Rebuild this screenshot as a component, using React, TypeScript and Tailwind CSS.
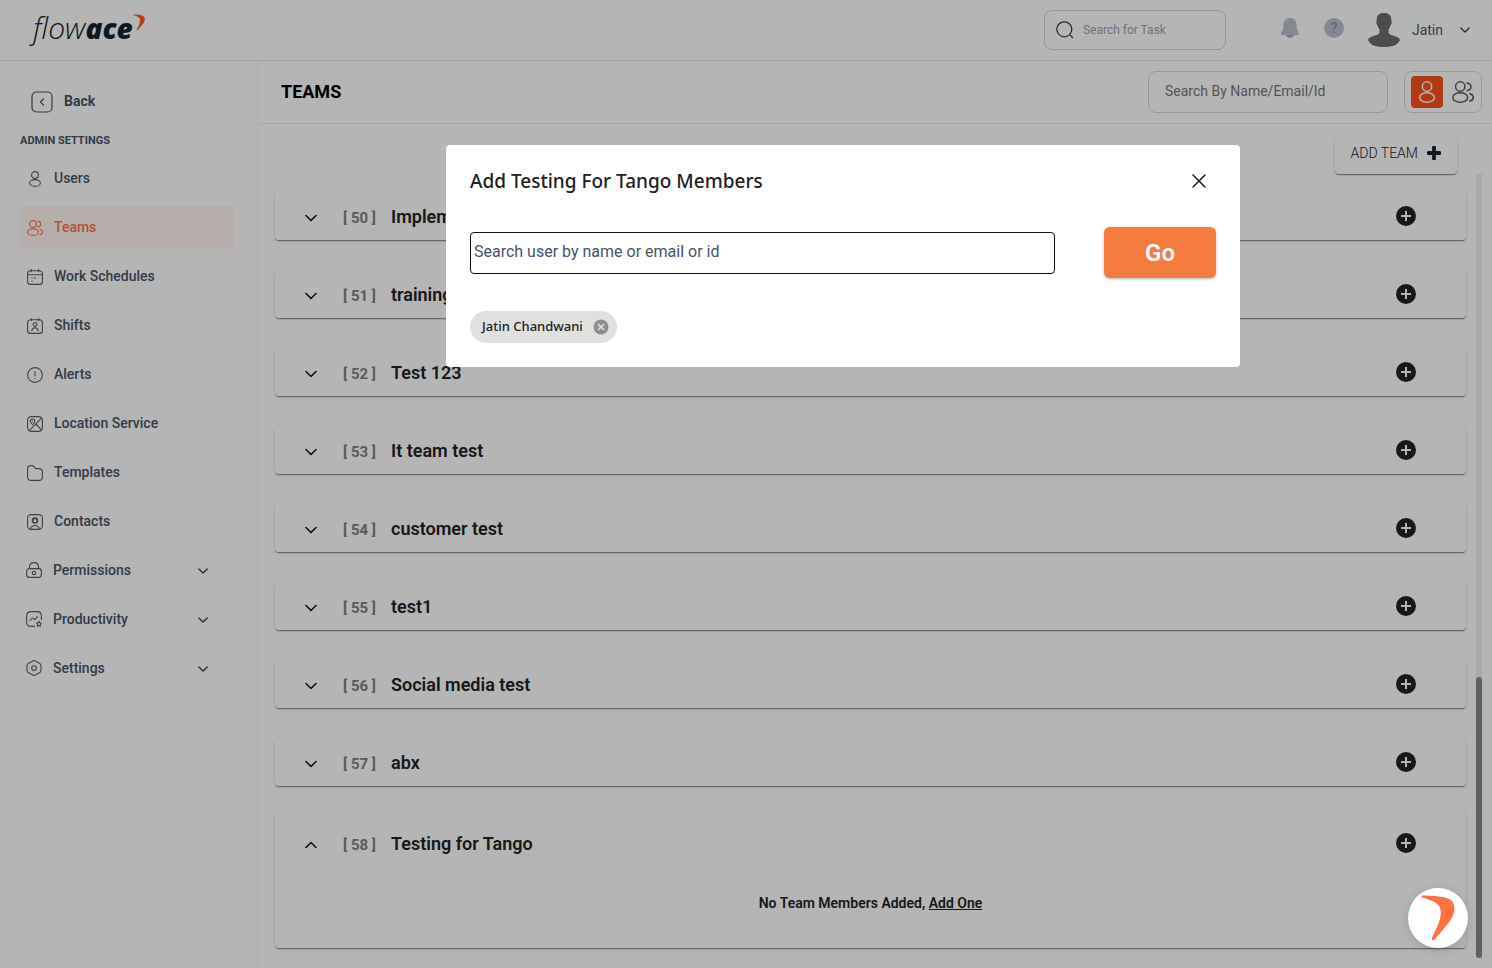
import { useState, type ReactNode } from "react";

type IconProps = { className?: string };

const stroke = {
  fill: "none",
  stroke: "currentColor",
  strokeLinecap: "round" as const,
  strokeLinejoin: "round" as const,
};

function Svg({ className = "size-4", width = 1.1, children }: IconProps & { width?: number; children: ReactNode }) {
  return (
    <svg viewBox="0 0 16 16" className={className} {...stroke} strokeWidth={width} aria-hidden="true">
      {children}
    </svg>
  );
}

const UserIcon = ({ className }: IconProps) => (
  <Svg className={className}>
    <circle cx="8" cy="4" r="3.4" />
    <ellipse cx="8" cy="12" rx="5.4" ry="3.4" />
  </Svg>
);

const UsersIcon = ({ className }: IconProps) => (
  <Svg className={className}>
    <circle cx="6" cy="4" r="3.4" />
    <ellipse cx="6" cy="12" rx="5.4" ry="3.4" />
    <path d="M11 1.4c1.7.3 2.8 1.3 2.8 2.7s-1.1 2.5-2.8 2.8M13 9.2c1.5.4 2.5 1.4 2.5 2.7s-1 2.3-2.5 2.7" />
  </Svg>
);

const CalendarIcon = () => (
  <Svg>
    <rect x=".6" y="1.8" width="14.8" height="13.6" rx="3" />
    <path d="M.8 5.8h14.4M4.3.6v2M11.7.6v2" />
    <path d="M5 9h.01M8 9h.01M5 12h.01M8 8.6v.8" strokeWidth="1.4" />
  </Svg>
);

const ShiftIcon = () => (
  <Svg>
    <rect x=".6" y="1.8" width="14.8" height="13.6" rx="3" />
    <path d="M4.3.6v2M11.7.6v2" />
    <circle cx="8" cy="6.6" r="1.9" />
    <path d="M4.8 12.8c.3-2 1.5-3.1 3.2-3.1s2.9 1.1 3.2 3.1M8 8.5v1.2" />
  </Svg>
);

const AlertIcon = () => (
  <Svg>
    <circle cx="8" cy="8" r="7.4" />
    <path d="M8 4.5v4.3M8 11.3v.2" />
  </Svg>
);

const LocationIcon = () => (
  <Svg>
    <rect x=".6" y=".6" width="14.8" height="14.8" rx="3.6" />
    <path d="M5.6 8.6C4.4 7.6 3.4 6.4 3.4 5.2a2.2 2.2 0 0 1 4.4 0c0 1.2-1 2.4-2.2 3.4z" />
    <path d="M5.6 5.2h.01M14.6 2.2 2.4 14.4M9.3 8.5l5.4 5.6" />
  </Svg>
);

const FolderIcon = () => (
  <Svg>
    <path d="M.6 12V3.6c0-2 1-3 3-3h1.3c1 0 1.5.3 2 1l1.2 1.5c.3.4.6.5 1.1.5h2.9c2.3 0 3.3 1 3.3 3.3V12c0 2.3-1 3.4-3.3 3.4H4C1.7 15.4.6 14.3.6 12z" />
  </Svg>
);

const ContactIcon = () => (
  <Svg>
    <rect x=".6" y=".6" width="14.8" height="14.8" rx="3.6" />
    <circle cx="8" cy="6.6" r="2.4" strokeWidth="1.7" />
    <path d="M3.6 15c.5-2.3 2.1-3.5 4.4-3.5s3.9 1.2 4.4 3.5" />
  </Svg>
);

const LockIcon = () => (
  <Svg>
    <rect x=".6" y="6.6" width="14.8" height="8.8" rx="2.8" />
    <path d="M3.5 6.4V5C3.5 2.3 5 .6 8 .6s4.5 1.7 4.5 4.4v1.4" />
    <circle cx="8" cy="11" r="1.7" />
  </Svg>
);

const ProductivityIcon = () => (
  <Svg>
    <path d="M8.5 15.4H5c-3 0-4.4-1.4-4.4-4.4V5C.6 2 2 .6 5 .6h6c3 0 4.4 1.4 4.4 4.4v3.5" />
    <path d="m4.3 9.3 1.6-1.8c.3-.4.8-.4 1.2-.1l1.1.8c.4.3.8.2 1.2-.1l2-2.4" />
    <path d="m13 10.3.8 1.5 1.6.4-1.1 1.3.2 1.7-1.5-.6-1.5.6.2-1.7-1.1-1.3 1.6-.4z" />
  </Svg>
);

const SettingsIcon = () => (
  <Svg>
    <path d="M9.3.9 13.7 3.4c.8.5 1.3 1.2 1.3 2.2v4.8c0 1-.5 1.7-1.3 2.2l-4.4 2.5c-.9.5-1.7.5-2.6 0l-4.4-2.5C1.5 12.1 1 11.4 1 10.4V5.6c0-1 .5-1.7 1.3-2.2L6.7.9c.9-.5 1.7-.5 2.6 0z" />
    <circle cx="8" cy="8" r="2.3" />
  </Svg>
);

function Chevron({ up = false, className = "size-3" }: IconProps & { up?: boolean }) {
  return (
    <svg viewBox="0 0 12 12" className={className} {...stroke} strokeWidth="1.6" aria-hidden="true">
      <path d={up ? "M1 8.5 6 3.5l5 5" : "m1 3.5 5 5 5-5"} />
    </svg>
  );
}

function Swoosh({ className }: IconProps) {
  return (
    <svg viewBox="0 0 34 46" className={className} fill="currentColor" aria-hidden="true">
      <path d="M.6.6C.2 1.5.6 2.3 1.7 2.7 12 5.5 19.5 8 19.8 17c.2 8-4.5 17-8.8 25.5-.5 1.1-.3 2.4.7 2.7.9.3 1.5-.2 2.1-.9C22 34 33 24 33.5 14.5 33.9 5 27 2.5 18 1.6 12 1 6 .7.6.6z" />
    </svg>
  );
}

const links = [
  { name: "Users", icon: <UserIcon /> },
  { name: "Teams", icon: <UsersIcon />, active: true },
  { name: "Work Schedules", icon: <CalendarIcon /> },
  { name: "Shifts", icon: <ShiftIcon /> },
  { name: "Alerts", icon: <AlertIcon /> },
  { name: "Location Service", icon: <LocationIcon /> },
  { name: "Templates", icon: <FolderIcon /> },
  { name: "Contacts", icon: <ContactIcon /> },
];

const groups = [
  { name: "Permissions", icon: <LockIcon /> },
  { name: "Productivity", icon: <ProductivityIcon /> },
  { name: "Settings", icon: <SettingsIcon /> },
];

const teams = [
  { id: 50, name: "Implementation" },
  { id: 51, name: "training" },
  { id: 52, name: "Test 123" },
  { id: 53, name: "It team test" },
  { id: 54, name: "customer test" },
  { id: 55, name: "test1" },
  { id: 56, name: "Social media test" },
  { id: 57, name: "abx" },
];

const cardShadow = "rounded bg-white shadow-[0_2px_1px_-1px_rgba(0,0,0,0.25),0_1px_1px_rgba(0,0,0,0.2),0_1px_3px_rgba(0,0,0,0.15)]";

function TeamHeader({ id, name, open = false }: { id: number; name: string; open?: boolean }) {
  return (
    <div className="flex h-12 items-center pr-[50px] pl-[30px]">
      <button type="button" aria-label={`Toggle ${name}`} className="mt-1 text-[#101828]">
        <Chevron up={open} />
      </button>
      <span className="mt-1 ml-[26px] w-12 text-[15px] font-bold text-[#808080]">[ {id} ]</span>
      <h2 className="mt-px text-lg font-semibold text-[#222]">{name}</h2>
      <button type="button" aria-label={`Add member to ${name}`} className="ml-auto">
        <svg viewBox="0 0 20 20" className="size-5" aria-hidden="true">
          <circle cx="10" cy="10" r="10" fill="#222" />
          <path d="M10 5v10M5 10h10" stroke="#fff" strokeWidth="2" />
        </svg>
      </button>
    </div>
  );
}

function Header() {
  return (
    <header className="flex h-[61px] shrink-0 items-center border-b border-[#e4e4e7] pr-[22px] pl-[33px]">
      <a href="#" aria-label="flowace" className="flex items-start pb-1 text-[#13222f]">
        <span className="font-['Open_Sans'] text-3xl leading-9 font-light italic">flow</span>
        <span className="font-['Open_Sans'] text-[28px] leading-9 font-extrabold italic">ace</span>
        <Swoosh className="mt-1 h-[17px] w-3 text-[#ff571a]" />
      </a>
      <div className="ml-auto flex items-center">
        <label className="flex h-10 w-[182px] items-center gap-[9px] rounded-lg border border-[#d0d5dd] px-[11px]">
          <svg viewBox="0 0 18 18" className="size-[18px] shrink-0 text-[#344054]" {...stroke} strokeWidth="1.3" aria-hidden="true">
            <circle cx="8.3" cy="8.3" r="7.5" />
            <path d="m14.5 14.5 2 2" />
          </svg>
          <input
            type="text"
            aria-label="Search for Task"
            placeholder="Search for Task"
            className="w-full min-w-0 text-xs outline-none placeholder:text-[#98a2b3]"
          />
        </label>
        <button type="button" aria-label="Notifications" className="mb-1 ml-[55px]">
          <svg viewBox="0 0 18 20" className="h-5 w-[18px]" aria-hidden="true">
            <path d="M4.8 16.5h8.4c-.6 2-2.2 3.3-4.2 3.3s-3.6-1.3-4.2-3.3z" fill="#98a2b3" />
            <path d="M9 0c3.7 0 6.3 2.6 6.6 6.2l.3 4.8 1.8 3.3c.7 1.5 0 2.8-1.6 3H1.9c-1.6-.2-2.3-1.5-1.6-3L2.1 11l.3-4.8C2.7 2.6 5.3 0 9 0z" fill="#bcc2ce" />
          </svg>
        </button>
        <button
          type="button"
          aria-label="Help"
          className="mb-1 ml-[25px] flex size-5 items-center justify-center rounded-full bg-[#bcc2ce] text-sm font-medium text-[#8a94a6]"
        >
          ?
        </button>
        <button type="button" className="ml-6 flex items-center">
          <svg viewBox="0 0 32 34" className="h-[34px] w-8" fill="#6b6b6b" aria-hidden="true">
            <path d="M16 0c4.8 0 7.3 2.5 7.3 6.5 0 1.3.5 2.4.3 4-.2 1.3-1 1.5-1.3 2.5-.4 1.5-1 2.5-1.8 3.6v3.2c.8 2 4.5 2.6 7.5 3.8 2.2.8 3.4 1.8 4 3.4C29.5 32 25 34 16 34S2.5 32 0 27c.6-1.6 1.8-2.6 4-3.4 3-1.2 6.7-1.8 7.5-3.8v-3.2c-.8-1.1-1.4-2.1-1.8-3.6-.3-1-1.1-1.2-1.3-2.5-.2-1.6.3-2.7.3-4C8.7 2.5 11.2 0 16 0z" />
          </svg>
          <span className="ml-3 text-sm text-[#475467]">Jatin</span>
          <Chevron className="ml-[17px] size-[10px] text-[#344054]" />
        </button>
      </div>
    </header>
  );
}

function Sidebar() {
  return (
    <aside className="w-[255px] shrink-0 px-5 pt-[29px] text-sm font-medium text-[#475467]">
      <a href="#" className="ml-[11px] flex items-center gap-[11px] font-bold">
        <svg viewBox="0 0 22 22" className="mt-px size-[22px]" {...stroke} strokeWidth="1.2" aria-hidden="true">
          <rect x="1" y="1" width="20" height="20" rx="4.5" />
          <path d="M12.5 8 9.5 11l3 3" />
        </svg>
        <span className="pb-[2px]">Back</span>
      </a>
      <h3 className="mt-5 text-[11px] leading-4 font-bold">ADMIN SETTINGS</h3>
      <nav className="mt-2 flex flex-col gap-[6px]">
        {links.map((link) => (
          <a
            key={link.name}
            href="#"
            className={
              link.active
                ? "flex h-[43px] items-center gap-[11px] rounded-md bg-[#fff5f1] pb-[2px] pl-[7px] text-[#ff7043]"
                : "flex h-[43px] items-center gap-[11px] pb-[2px] pl-[7px]"
            }
          >
            <span className={link.active ? "mt-[2px]" : "mt-[2px] text-[#5c5c5c]"}>{link.icon}</span>
            {link.name}
          </a>
        ))}
        {groups.map((group) => (
          <button
            key={group.name}
            type="button"
            className="flex h-[43px] items-center gap-[11px] pr-[27px] pb-[2px] pl-[6px]"
          >
            <span className="text-[#5c5c5c]">{group.icon}</span>
            {group.name}
            <Chevron className="mt-[2px] ml-auto size-[10px] text-[#344054]" />
          </button>
        ))}
      </nav>
    </aside>
  );
}

function Modal() {
  const [members, setMembers] = useState(["Jatin Chandwani"]);

  return (
    <div className="fixed inset-0 flex items-start justify-center bg-black/29 pt-[145px] pl-[194px]">
      <div role="dialog" aria-labelledby="dialog-title" className="w-[794px] rounded bg-white p-6">
        <div className="flex items-center justify-between">
          <h2 id="dialog-title" className="font-['Noto_Sans'] text-[19px] leading-6 font-medium text-[#212121]">
            Add Testing For Tango Members
          </h2>
          <button type="button" aria-label="Close" className="mr-[10px] text-[#212121]">
            <svg viewBox="0 0 14 14" className="size-[14px]" {...stroke} strokeWidth="1.6" aria-hidden="true">
              <path d="m1 1 12 12M13 1 1 13" />
            </svg>
          </button>
        </div>
        <div className="mt-[34px] flex items-center justify-between">
          <input
            type="text"
            aria-label="Search user"
            placeholder="Search user by name or email or id"
            className="h-[42px] w-[585px] rounded border border-[#111] px-[3px] pb-[2px] text-base outline-none placeholder:text-[#475467]"
          />
          <button
            type="button"
            className="h-[51px] w-28 rounded-md bg-[#f67b3e] text-2xl font-semibold text-white shadow-[0_1px_3px_rgba(0,0,0,0.3)]"
          >
            Go
          </button>
        </div>
        <div className="mt-[33px] flex">
          {members.map((member) => (
            <span
              key={member}
              className="flex h-8 items-center gap-[10px] rounded-full bg-[#e0e0e0] pr-2 pl-3 font-['Noto_Sans'] text-[13px] font-medium text-[#212121]"
            >
              {member}
              <button
                type="button"
                aria-label={`Remove ${member}`}
                onClick={() => setMembers(members.filter((m) => m !== member))}
              >
                <svg viewBox="0 0 16 16" className="size-4" aria-hidden="true">
                  <circle cx="8" cy="8" r="7.5" fill="#8e8e8e" />
                  <path d="m5 5 6 6M11 5l-6 6" stroke="#e0e0e0" strokeWidth="1.7" />
                </svg>
              </button>
            </span>
          ))}
        </div>
      </div>
    </div>
  );
}

export default function App() {
  return (
    <div className="flex h-screen flex-col overflow-hidden bg-white font-[Roboto,sans-serif]">
      <Header />
      <div className="flex min-h-0 flex-1">
        <Sidebar />
        <main className="flex min-w-0 flex-1 flex-col border-l-4 border-[#fcfcfc]">
          <div className="flex h-[63px] shrink-0 items-center border-b border-[#ececec] pr-[10px] pl-[22px]">
            <h1 className="text-lg font-bold text-black">TEAMS</h1>
            <input
              type="text"
              aria-label="Search By Name/Email/Id"
              placeholder="Search By Name/Email/Id"
              className="ml-auto h-[42px] w-60 rounded-lg border border-[#d9d9de] px-4 pb-[2px] text-sm outline-none placeholder:text-[#757575]"
            />
            <div className="ml-4 flex h-[42px] w-[78px] items-center gap-[9px] rounded-lg border border-[#d9d9de] pl-[6px]">
              <button
                type="button"
                aria-label="Single view"
                className="flex size-8 shrink-0 items-center justify-center rounded bg-[#f9511c] text-white"
              >
                <UserIcon className="size-[22px]" />
              </button>
              <button type="button" aria-label="Group view" className="text-[#5c5c5c]">
                <UsersIcon className="size-[22px]" />
              </button>
            </div>
          </div>

          <div className="flex justify-end pt-[11px] pr-[35px]">
            <button
              type="button"
              className={`flex h-[39px] items-center gap-[9px] px-4 pb-1 text-sm font-light text-[#13222f] ${cardShadow}`}
            >
              ADD TEAM
              <svg viewBox="0 0 14 14" className="size-[14px]" aria-hidden="true">
                <path d="M7 1.5v11M1.5 7h11" stroke="#13222f" strokeWidth="3.8" strokeLinecap="round" />
              </svg>
            </button>
          </div>

          <div className="mr-[10px] mb-[10px] flex min-h-0 flex-1">
            <div className="flex min-w-0 flex-1 flex-col overflow-hidden pt-[18px] pr-[10px] pl-4">
              <div className="flex flex-col gap-[30px]">
                {teams.map((team) => (
                  <section key={team.id} className={cardShadow}>
                    <TeamHeader id={team.id} name={team.name} />
                  </section>
                ))}
              </div>
              <section className={`mt-[25px] h-[137px] shrink-0 pt-2 ${cardShadow}`}>
                <TeamHeader id={58} name="Testing for Tango" open />
                <p className="mt-[26px] text-center text-sm font-semibold text-[#222]">
                  No Team Members Added,{" "}
                  <a href="#" className="underline">
                    Add One
                  </a>
                </p>
              </section>
            </div>
            <div className="flex w-[6px] flex-col justify-end bg-[#efefef]">
              <div className="h-[281px] rounded-full bg-[#888]" />
            </div>
          </div>
        </main>
      </div>

      <Modal />

      <button
        type="button"
        aria-label="Open assistant"
        className="fixed right-6 bottom-5 flex size-15 items-center justify-center rounded-full bg-white text-[#ff7043] shadow-[0_2px_10px_rgba(0,0,0,0.15)]"
      >
        <Swoosh className="h-[46px] w-[34px]" />
      </button>
    </div>
  );
}
